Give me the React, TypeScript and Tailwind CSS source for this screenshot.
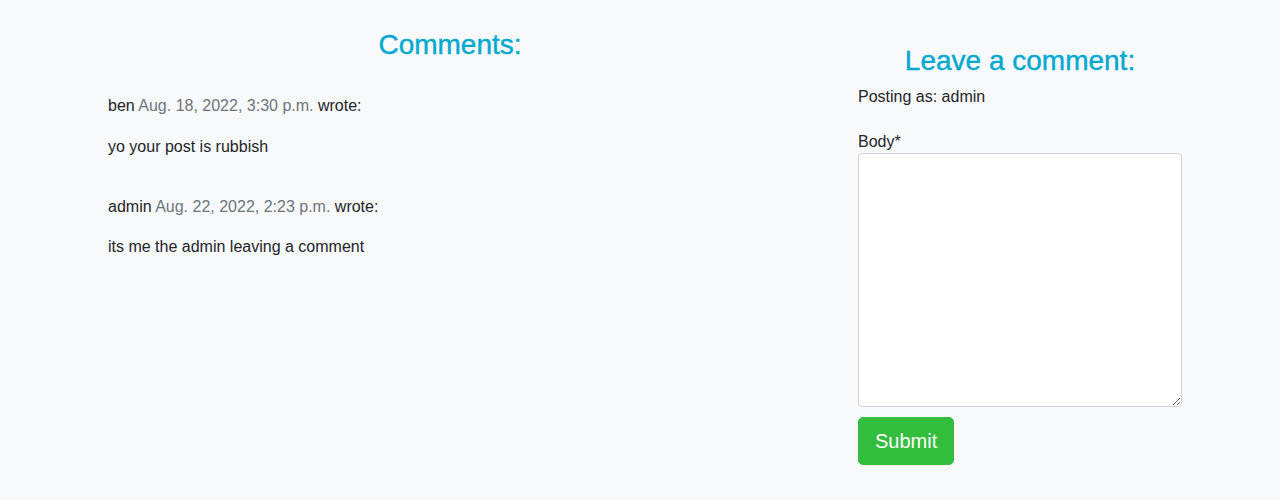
const comments = [
  { author: 'ben', date: 'Aug. 18, 2022, 3:30 p.m.', body: 'yo your post is rubbish' },
  { author: 'admin', date: 'Aug. 22, 2022, 2:23 p.m.', body: 'its me the admin leaving a comment' },
]

export default function App() {
  return (
    <div className="min-h-[500px] bg-[#f8f9fa] font-['Liberation_Sans',Arial,sans-serif] text-[16px] text-[#212529]">
      <div className="mx-auto flex max-w-[1140px]">
        {/* Comments list */}
        <div className="w-2/3 px-3 pt-[28px]">
          <h3 className="text-center text-[28px] leading-[1.2] text-[#03a8d1] [-webkit-text-stroke:0.4px_#03a8d1]">
            Comments:
          </h3>
          <div className="mt-[32px] pl-[26px]">
            {comments.map((c, i) => (
              <div key={i} className={i > 0 ? 'pt-[20px]' : ''}>
                <p className={i === 0 ? 'mb-[17px] leading-6' : 'mb-4 leading-6'}>
                  {c.author} <span className="text-[#6c757d]">{c.date}</span> wrote:
                </p>
                <p className="mb-4 leading-6">{c.body}</p>
              </div>
            ))}
          </div>
        </div>

        {/* Comment form */}
        <div className="w-1/3 px-3 pt-[44px]">
          <div className="px-4">
            <h3 className="mb-[7px] text-center text-[28px] leading-[1.2] text-[#03a8d1] [-webkit-text-stroke:0.4px_#03a8d1]">
              Leave a comment:
            </h3>
            <p className="leading-6">Posting as: admin</p>
            <form className="mt-[20px]" onSubmit={(e) => e.preventDefault()}>
              <label htmlFor="body" className="block pt-[1px] leading-[23px]">
                Body*
              </label>
              <textarea
                id="body"
                className="block h-[254px] w-full rounded border border-[#ced4da] bg-white px-3 py-1.5 outline-none"
              />
              <button
                type="submit"
                className="mt-[10px] rounded-[5px] border border-[#33bd3d] bg-[#33bd3d] px-4 py-2 text-[20px] leading-[30px] text-white"
              >
                Submit
              </button>
            </form>
          </div>
        </div>
      </div>
    </div>
  )
}
